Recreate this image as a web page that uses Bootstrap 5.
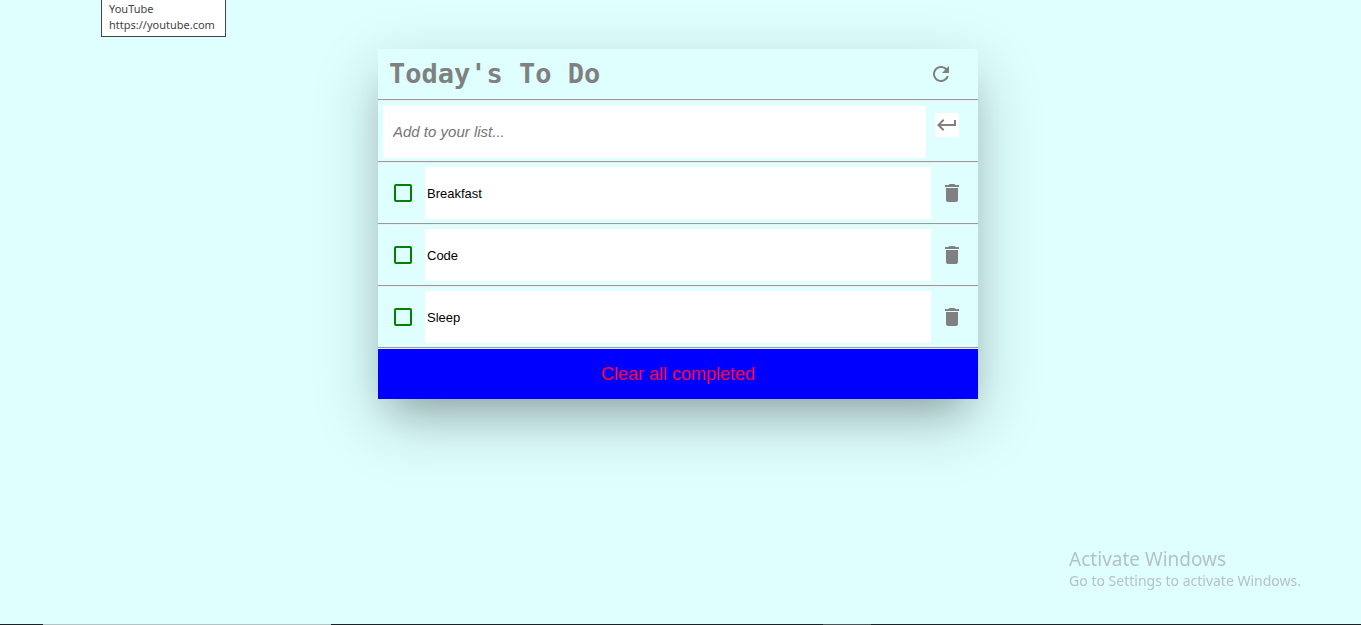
<!DOCTYPE html>
<html lang="en">
<head>
<meta charset="utf-8">
<meta name="viewport" content="width=device-width, initial-scale=1">
<title>Today's To Do</title>
<link rel="stylesheet" href="https://cdn.jsdelivr.net/npm/bootstrap@5.3.0/dist/css/bootstrap.min.css">
<style>
  body { background: #dfffff; font-family: "Liberation Sans", Arial, sans-serif; }
  main { padding: 49px 5px 0 0; }
  .todo {
    max-width: 600px;
    background: #dfffff;
    box-shadow: 0 22px 60px rgba(0, 0, 0, .23), 0 22px 36px -18px rgba(0, 0, 0, .22);
  }
  .todo-head { height: 50px; padding: 0 25px 0 11px; }
  .todo-head h1 { font: bold 27px/50px "DejaVu Sans Mono", monospace; color: gray; }
  .todo-row { border-top: 1px solid #999; box-shadow: inset 0 1px #eee; }
  .add-row { padding: 6px 19px 3px 5px; }
  .item-row { padding: 5px 14px 4px 16px; }
  .todo-row input[type=text] { min-width: 0; height: 52px; border: 0; background: #fff; color: #000; }
  .add-row input[type=text] { margin-right: 9px; padding: 0 10px 2px; font-size: 15px; font-style: italic; }
  .add-row input::placeholder { color: #757575; }
  .item-row input[type=text] { margin: 0 9px 0 13px; padding: 0 2px; font-size: 13px; }
  .tick { appearance: none; width: 18px; height: 18px; margin: 0; border: 2px solid green; border-radius: 2px; }
  .tick:checked { background: green; }
  .icon-btn { width: 24px; height: 24px; padding: 0; border: 0; background: none; color: gray; }
  .icon-btn svg { display: block; fill: currentColor; }
  .enter-btn { background: #fff; margin-top: 7px; }
  .last-rule { height: 2px; background: #eee; border-top: 1px solid #999; }
  .clear-btn { height: 50px; border: 0; background: #00f; color: #ff0030; font-size: 18px; }
  .link-tip {
    left: 101px; top: -1px; padding: 1px 10px 3px 7px; border: 1px solid #444; background: #fff;
    color: #444; font: 11px/16px "Noto Sans", sans-serif;
  }
  .activate { right: 60px; bottom: 34px; color: #b5c2c2; font: 14px/20px "Noto Sans", sans-serif; }
  .activate strong { display: block; font-weight: 400; font-size: 19px; line-height: 24px; }
  .strip { height: 1px; background: #182328; }
  .strip span:nth-child(1) { width: 43px; }
  .strip span:nth-child(2) { width: 288px; background: #b2c4c4; }
  .strip span:nth-child(3) { width: 492px; }
  .strip span:nth-child(4) { width: 48px; background: #4a5556; }
</style>
</head>
<body class="min-vh-100">
<svg class="d-none" aria-hidden="true">
  <symbol id="trash" viewBox="0 0 24 24"><path d="M6 19c0 1.1.9 2 2 2h8c1.1 0 2-.9 2-2V7H6v12zM19 4h-3.5l-1-1h-5l-1 1H5v2h14V4z"/></symbol>
</svg>

<div class="link-tip position-absolute">YouTube<br>https://youtube.com</div>

<main class="min-vh-100">
  <section class="todo mx-auto">
    <header class="todo-head d-flex align-items-center justify-content-between">
      <h1 class="m-0">Today's To Do</h1>
      <button class="icon-btn" type="button" aria-label="Refresh">
        <svg width="24" height="24" viewBox="0 0 24 24"><path d="M17.65 6.35C16.2 4.9 14.21 4 12 4c-4.42 0-7.99 3.58-7.99 8s3.57 8 7.99 8c3.73 0 6.84-2.55 7.73-6h-2.08c-.82 2.33-3.04 4-5.65 4-3.31 0-6-2.69-6-6s2.69-6 6-6c1.66 0 3.14.69 4.22 1.78L13 11h7V4l-2.35 2.35z"/></svg>
      </button>
    </header>

    <form class="todo-row add-row d-flex align-items-start">
      <input class="flex-fill" type="text" placeholder="Add to your list..." aria-label="Add to your list">
      <button class="icon-btn enter-btn" type="button" aria-label="Add">
        <svg width="24" height="24" viewBox="0 0 24 24"><path d="M19 7v4H5.83l3.58-3.59L8 6l-6 6 6 6 1.41-1.41L5.83 13H21V7z"/></svg>
      </button>
    </form>

    <div class="todo-row item-row d-flex align-items-center">
      <input class="tick" type="checkbox" aria-label="Breakfast done">
      <input class="flex-fill" type="text" value="Breakfast" aria-label="Task 1">
      <button class="icon-btn" type="button" aria-label="Delete Breakfast"><svg width="24" height="24"><use href="#trash"/></svg></button>
    </div>
    <div class="todo-row item-row d-flex align-items-center">
      <input class="tick" type="checkbox" aria-label="Code done">
      <input class="flex-fill" type="text" value="Code" aria-label="Task 2">
      <button class="icon-btn" type="button" aria-label="Delete Code"><svg width="24" height="24"><use href="#trash"/></svg></button>
    </div>
    <div class="todo-row item-row d-flex align-items-center">
      <input class="tick" type="checkbox" aria-label="Sleep done">
      <input class="flex-fill" type="text" value="Sleep" aria-label="Task 3">
      <button class="icon-btn" type="button" aria-label="Delete Sleep"><svg width="24" height="24"><use href="#trash"/></svg></button>
    </div>
    <div class="last-rule"></div>
    <button class="clear-btn d-block w-100" type="button">Clear all completed</button>
  </section>
</main>

<aside class="activate position-fixed"><strong>Activate Windows</strong>Go to Settings to activate Windows.</aside>
<div class="strip fixed-bottom d-flex" aria-hidden="true"><span></span><span></span><span></span><span></span></div>
<script src="https://cdn.jsdelivr.net/npm/bootstrap@5.3.0/dist/js/bootstrap.bundle.min.js"></script>
</body>
</html>
